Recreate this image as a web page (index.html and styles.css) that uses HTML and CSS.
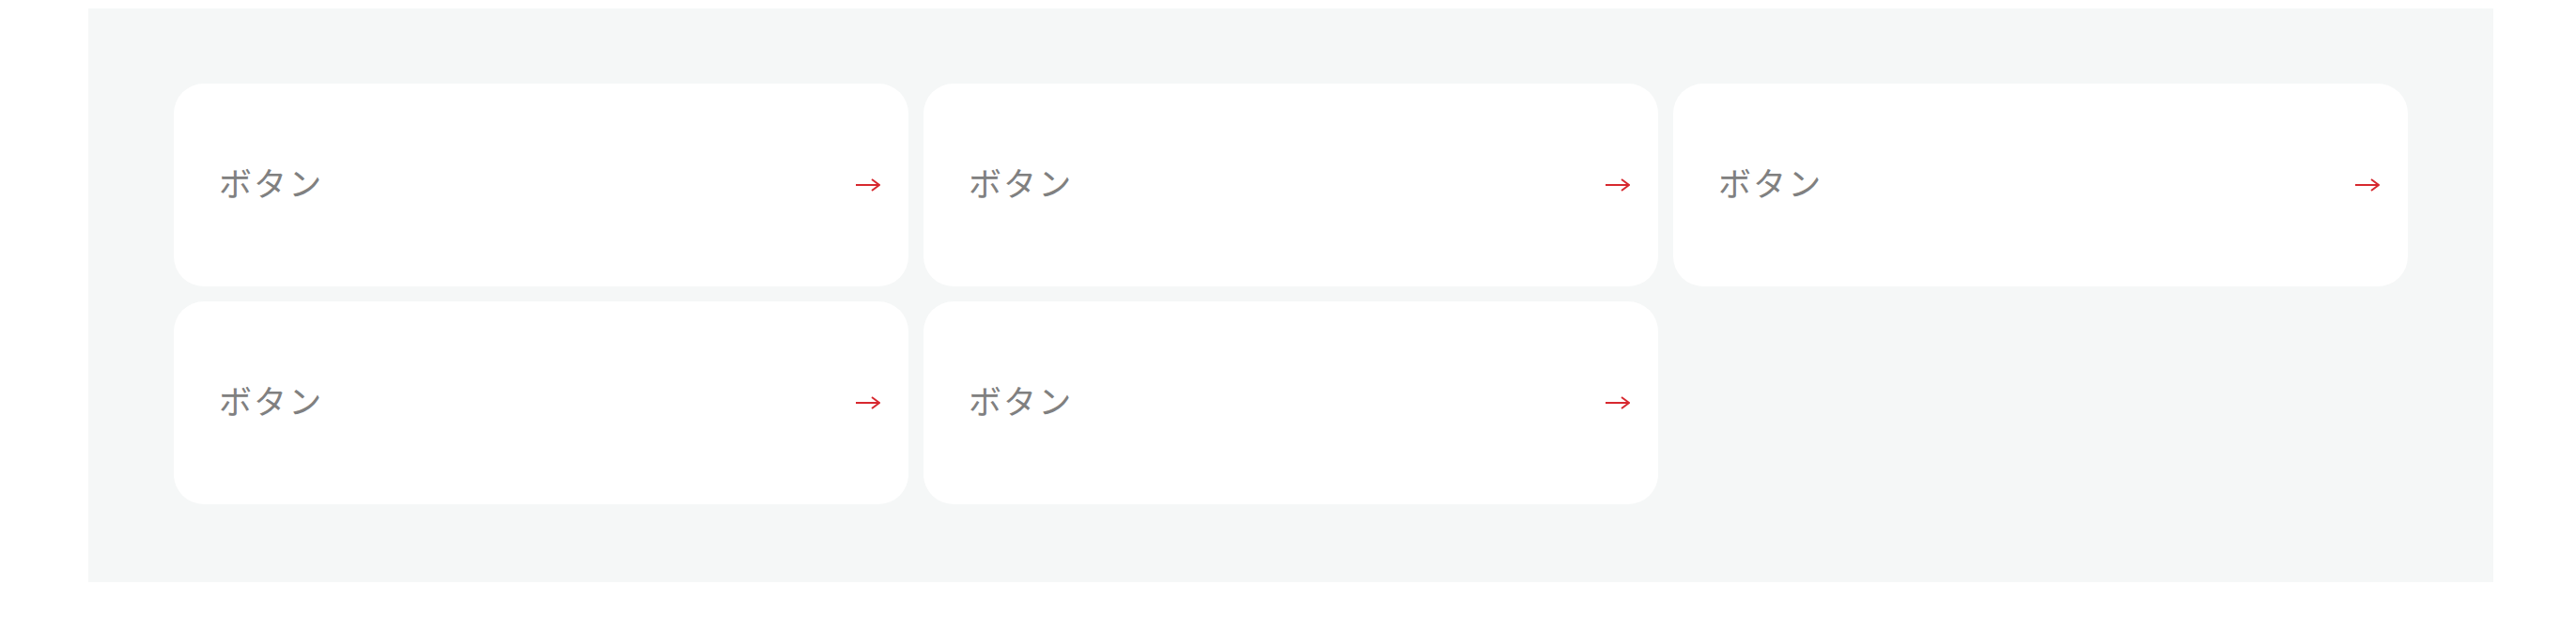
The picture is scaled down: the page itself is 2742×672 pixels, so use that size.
FILE: index.html
```html
<!DOCTYPE html>
<html lang="ja">

<head>
    <meta charset="UTF-8">
    <meta name="viewport" content="width=device-width, initial-scale=1.0">
    <title>ボタン</title>
    <link rel="stylesheet" href="styles.css">
</head>
<body>
    <div class="panel">
        <div class="button-grid">
            <a class="link-button" href="#">
                <span class="label">ボタン</span>
                <svg class="arrow" width="26" height="14" viewBox="0 0 26 14"><path d="M0 7H25M17 1L25 7L17 13" fill="none" stroke="currentColor" stroke-width="2"/></svg>
            </a>
            <a class="link-button" href="#">
                <span class="label">ボタン</span>
                <svg class="arrow" width="26" height="14" viewBox="0 0 26 14"><path d="M0 7H25M17 1L25 7L17 13" fill="none" stroke="currentColor" stroke-width="2"/></svg>
            </a>
            <a class="link-button" href="#">
                <span class="label">ボタン</span>
                <svg class="arrow" width="26" height="14" viewBox="0 0 26 14"><path d="M0 7H25M17 1L25 7L17 13" fill="none" stroke="currentColor" stroke-width="2"/></svg>
            </a>
            <a class="link-button" href="#">
                <span class="label">ボタン</span>
                <svg class="arrow" width="26" height="14" viewBox="0 0 26 14"><path d="M0 7H25M17 1L25 7L17 13" fill="none" stroke="currentColor" stroke-width="2"/></svg>
            </a>
            <a class="link-button" href="#">
                <span class="label">ボタン</span>
                <svg class="arrow" width="26" height="14" viewBox="0 0 26 14"><path d="M0 7H25M17 1L25 7L17 13" fill="none" stroke="currentColor" stroke-width="2"/></svg>
            </a>
        </div>
    </div>
</body>
</html>
```

FILE: styles.css
```css
body {
    margin: 0;
    padding: 9px 0 0 94px;
    background: #fff;
    font-family: "Noto Sans CJK JP", "Noto Sans", sans-serif;
}

.panel {
    width: 2560px;
    box-sizing: border-box;
    padding: 80px 91px 83px;
    background: #f5f7f7;
}

.button-grid {
    display: grid;
    grid-template-columns: repeat(3, 1fr);
    gap: 16px;
}

.link-button {
    display: flex;
    align-items: center;
    justify-content: space-between;
    height: 216px;
    padding: 0 30px 0 48px;
    border-radius: 32px;
    background: #fff;
    text-decoration: none;
}

.label {
    margin-bottom: 7px;
    font-size: 35px;
    line-height: 1;
    letter-spacing: 0.06em;
    color: #808080;
}

.arrow {
    display: block;
    color: #d7282f;
}
```
